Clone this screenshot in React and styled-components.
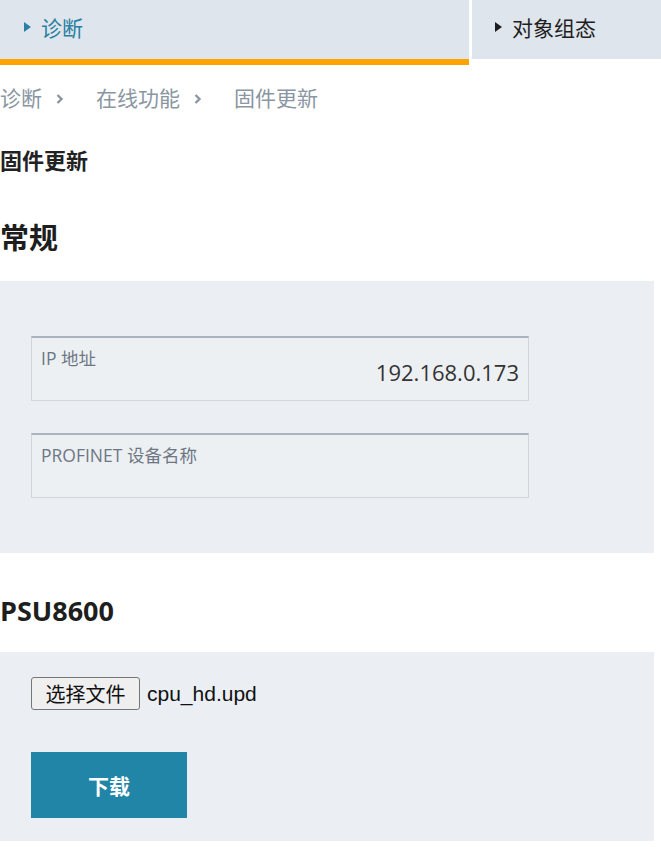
import React from "react";
import styled, { createGlobalStyle } from "styled-components";

const Global = createGlobalStyle`
  html, body { margin: 0; padding: 0; background: #fff; }
  body { font-family: "Open Sans", "Noto Sans CJK SC", sans-serif; color: #222; }
  * { box-sizing: border-box; }
`;

const Page = styled.div`
  width: 661px;
  display: flex;
  flex-direction: column;
`;

const TabBar = styled.div`
  display: flex;
  align-items: flex-start;
  gap: 3px;
  height: 65px;
`;

const Tab = styled.div`
  display: flex;
  align-items: center;
  gap: 10px;
  height: ${(p) => (p.$active ? "65px" : "59px")};
  width: ${(p) => p.$w}px;
  flex: ${(p) => (p.$grow ? "1" : "none")};
  padding-left: ${(p) => p.$pl}px;
  padding-bottom: 6px;
  background: #dfe5ec;
  border-bottom: ${(p) => (p.$active ? "6px solid #ffa300" : "none")};
  color: ${(p) => (p.$active ? "#2a7fa2" : "#1e1e1e")};
  font-size: 21px;
`;

const Arrow = styled.span`
  width: 0;
  height: 0;
  margin-top: 1px;
  border-top: 5px solid transparent;
  border-bottom: 5px solid transparent;
  border-left: 7px solid currentColor;
`;

const Crumbs = styled.div`
  display: flex;
  align-items: center;
  height: 68px;
  padding-bottom: 4px;
  font-size: 21px;
  color: #8a96a2;
`;

const Crumb = styled.span`
  margin-right: ${(p) => (p.$last ? 0 : 32)}px;
  display: flex;
  align-items: center;
  gap: 13px;
`;

const Chevron = styled.svg`
  width: 9px;
  height: 12px;
  margin-top: 3px;
`;

const PageTitle = styled.div`
  font-size: 22px;
  font-weight: 700;
  color: #222;
  height: 28px;
  line-height: 28px;
  margin-top: 13px;
`;

const SectionTitle = styled.h2`
  margin: ${(p) => p.$mt}px 0 0;
  height: ${(p) => p.$h}px;
  line-height: ${(p) => p.$h}px;
  font-size: ${(p) => p.$fs}px;
  font-weight: 700;
  color: #1e1e1e;
`;

const Panel = styled.div`
  width: 654px;
  background: #ebeff3;
  padding: ${(p) => p.$pad};
  margin-top: ${(p) => p.$mt}px;
  display: flex;
  flex-direction: column;
  gap: ${(p) => p.$gap}px;
`;

const Field = styled.div`
  width: 498px;
  height: 65px;
  border: 1px solid #cfd6dd;
  border-top: 2px solid #aab4be;
  background: #edf0f3;
  padding: 8px 9px 0 9px;
  display: flex;
  flex-direction: column;
`;

const FieldLabel = styled.div`
  font-size: 17.5px;
  color: #6d7783;
  line-height: 24px;
`;

const FieldValue = styled.div`
  text-align: right;
  font-size: 22px;
  color: #333;
  line-height: 26px;
  margin-top: -11px;
`;

const FileRow = styled.div`
  display: flex;
  align-items: center;
  gap: 7px;
`;

const FileButton = styled.button`
  height: 33px;
  width: 109px;
  border: 1px solid #767676;
  border-radius: 3px;
  background: #efefef;
  font-family: "Noto Sans CJK SC", sans-serif;
  font-size: 20px;
  line-height: 1;
  color: #111;
  padding: 0;
`;

const FileName = styled.span`
  font-family: "Liberation Sans", "Noto Sans CJK SC", sans-serif;
  font-size: 21px;
  color: #111;
`;

const Download = styled.button`
  width: 156px;
  height: 66px;
  border: none;
  background: #2185a8;
  color: #fff;
  font-family: "Noto Sans CJK SC", sans-serif;
  font-weight: 700;
  font-size: 21px;
  padding: 0;
`;

const ChevronIcon = () => (
  <Chevron viewBox="0 0 9 12">
    <path d="M2.5 2 L6.5 6 L2.5 10" fill="none" stroke="currentColor" strokeWidth="2.4" />
  </Chevron>
);

export default function App() {
  return (
    <Page>
      <Global />
      <TabBar>
        <Tab $active $w={469} $pl={24}>
          <Arrow />
          <span>诊断</span>
        </Tab>
        <Tab $grow $pl={23}>
          <Arrow />
          <span>对象组态</span>
        </Tab>
      </TabBar>
      <Crumbs>
        <Crumb>
          诊断 <ChevronIcon />
        </Crumb>
        <Crumb>
          在线功能 <ChevronIcon />
        </Crumb>
        <Crumb $last>固件更新</Crumb>
      </Crumbs>
      <PageTitle>固件更新</PageTitle>
      <SectionTitle $mt={44} $h={40} $fs={29}>常规</SectionTitle>
      <Panel $mt={23} $pad="55px 0 55px 31px" $gap={32}>
        <Field>
          <FieldLabel>IP 地址</FieldLabel>
          <FieldValue>192.168.0.173</FieldValue>
        </Field>
        <Field>
          <FieldLabel>PROFINET 设备名称</FieldLabel>
        </Field>
      </Panel>
      <SectionTitle $mt={40} $h={36} $fs={27}>PSU8600</SectionTitle>
      <Panel $mt={23} $pad="25px 0 23px 31px" $gap={42}>
        <FileRow>
          <FileButton>选择文件</FileButton>
          <FileName>cpu_hd.upd</FileName>
        </FileRow>
        <Download>下载</Download>
      </Panel>
    </Page>
  );
}
